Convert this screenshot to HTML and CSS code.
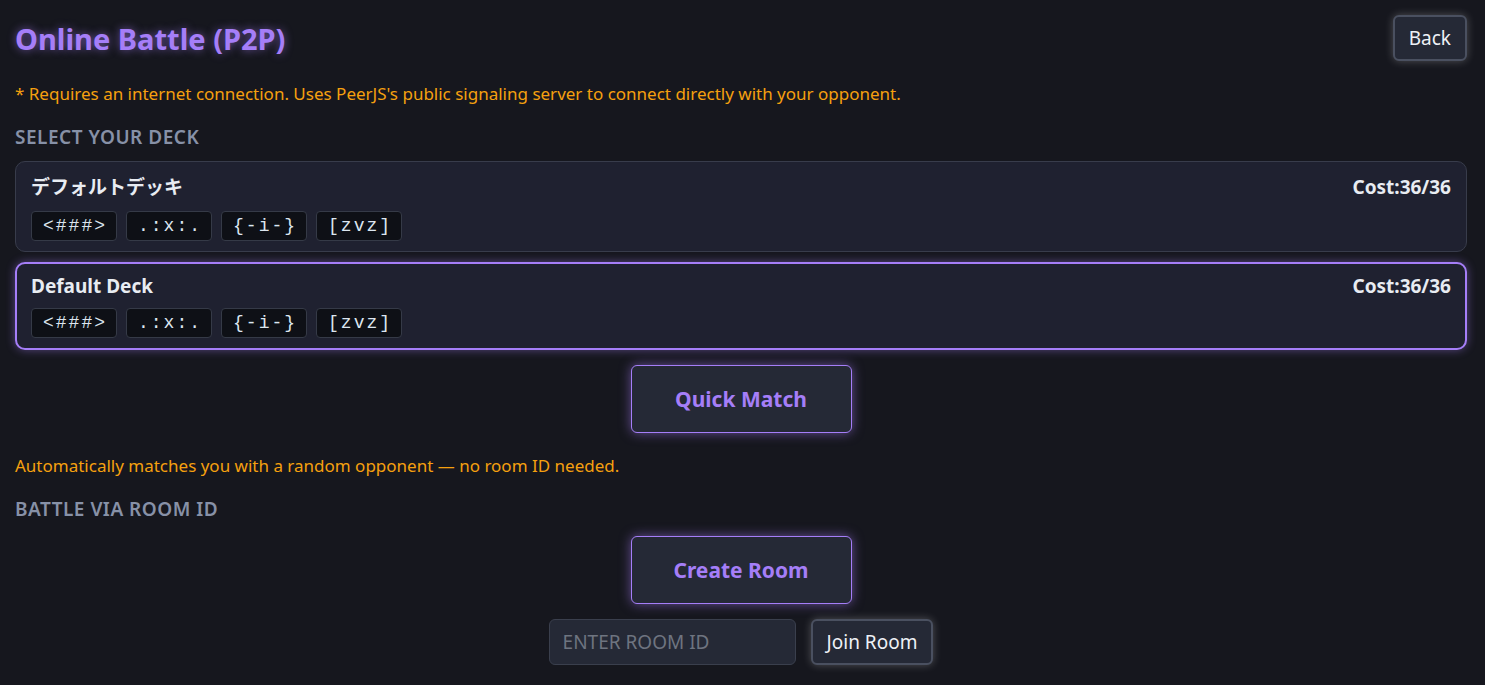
FILE: index.html
```html
<!DOCTYPE html>
<html>
	<head>
		<title>Online Battle</title>
		<link rel="stylesheet" href="styles.css">
	</head>
	<body>
		<div class="page">
			<div class="header">
				<h1 class="title">Online Battle (P2P)</h1>
				<button class="btn-small">Back</button>
			</div>
			<p class="note">* Requires an internet connection. Uses PeerJS's public signaling server to connect directly with your opponent.</p>

			<h2 class="section-label">SELECT YOUR DECK</h2>
			<div class="deck-list">
				<div class="deck">
					<div class="deck-head">
						<span class="deck-name" lang="ja">デフォルトデッキ</span>
						<span class="deck-cost">Cost:36/36</span>
					</div>
					<div class="chips">
						<span class="chip">&lt;###&gt;</span>
						<span class="chip">.:x:.</span>
						<span class="chip">{-i-}</span>
						<span class="chip">[zvz]</span>
					</div>
				</div>
				<div class="deck selected">
					<div class="deck-head">
						<span class="deck-name">Default Deck</span>
						<span class="deck-cost">Cost:36/36</span>
					</div>
					<div class="chips">
						<span class="chip">&lt;###&gt;</span>
						<span class="chip">.:x:.</span>
						<span class="chip">{-i-}</span>
						<span class="chip">[zvz]</span>
					</div>
				</div>
			</div>

			<div class="center-row first">
				<button class="btn-big">Quick Match</button>
			</div>
			<p class="note match-note">Automatically matches you with a random opponent — no room ID needed.</p>

			<h2 class="section-label">BATTLE VIA ROOM ID</h2>
			<div class="center-row">
				<button class="btn-big">Create Room</button>
			</div>
			<div class="center-row join-row">
				<input type="text" class="room-input" placeholder="ENTER ROOM ID" />
				<button class="btn-small">Join Room</button>
			</div>
		</div>
	</body>
</html>
```

FILE: styles.css
```css
body {
	margin: 0;
	background-color: #16171e;
	color: #e8ecf2;
	font-family: "Noto Sans", "Noto Sans CJK JP", sans-serif;
}
.page {
	padding: 15px 18px 15px 15px;
}
.header {
	display: flex;
	justify-content: space-between;
	align-items: center;
}
.title {
	margin: 0;
	font-size: 29px;
	font-weight: bold;
	color: #a57ef8;
	text-shadow: 0 0 8px rgba(167, 126, 248, 0.6);
}
.btn-small {
	height: 46px;
	padding: 0 14px;
	font-family: inherit;
	font-size: 19px;
	color: #eef1f6;
	background-color: #252936;
	border: 2px solid #4a5060;
	border-radius: 6px;
	box-shadow: 0 0 8px rgba(255, 255, 255, 0.25);
	cursor: pointer;
}
.note {
	margin: 22px 0 0;
	font-size: 17px;
	line-height: 22px;
	color: #f5a00f;
}
.section-label {
	margin: 20px 0 0;
	font-size: 19px;
	line-height: 24px;
	font-weight: 600;
	letter-spacing: 0.5px;
	color: #8791a7;
}
.deck-list {
	margin-top: 12px;
	display: flex;
	flex-direction: column;
	gap: 10px;
}
.deck {
	padding: 12px 15px 10px;
	background-color: #1f2130;
	border: 1px solid #383c4b;
	border-radius: 10px;
}
.deck.selected {
	padding: 12px 14px 10px;
	border: 2px solid #a57ef8;
	box-shadow: 0 0 10px rgba(167, 126, 248, 0.45);
}
.deck-head {
	display: flex;
	justify-content: space-between;
	align-items: center;
	font-size: 19px;
	line-height: 21px;
	font-weight: bold;
}
.deck-name:lang(ja) {
	line-height: 26px;
}
.chips {
	display: flex;
	gap: 9px;
	margin-top: 11px;
}
.chip {
	height: 28px;
	line-height: 28px;
	padding: 0 9px 0 11px;
	font-family: "Liberation Mono", monospace;
	font-size: 18px;
	letter-spacing: 2px;
	color: #dde6f0;
	background-color: #0e1016;
	border: 1px solid #353a47;
	border-radius: 4px;
}
.center-row {
	display: flex;
	justify-content: center;
	gap: 15px;
	margin-top: 15px;
}
.btn-big {
	width: 221px;
	height: 68px;
	font-family: inherit;
	font-size: 21px;
	font-weight: bold;
	color: #a57ef8;
	background-color: #252936;
	border: 1px solid #a57ef8;
	border-radius: 6px;
	box-shadow: 0 0 12px rgba(167, 126, 248, 0.55);
	cursor: pointer;
}
.room-input {
	width: 247px;
	height: 46px;
	box-sizing: border-box;
	padding: 0 13px;
	font-family: inherit;
	font-size: 19px;
	color: #e8ecf2;
	background-color: #252936;
	border: 1px solid #3a3f4d;
	border-radius: 6px;
}
.room-input::placeholder {
	color: #6e7480;
}
```
